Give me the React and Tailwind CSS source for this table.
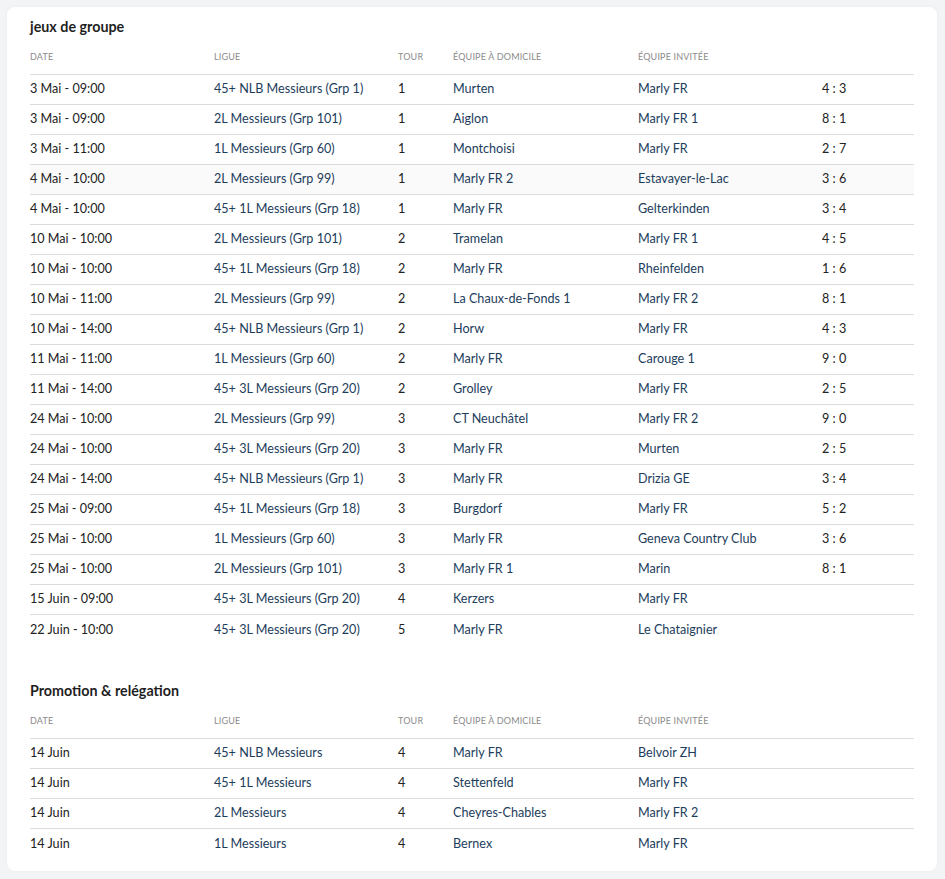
const groupGames = [
  ['3 Mai - 09:00', '45+ NLB Messieurs (Grp 1)', '1', 'Murten', 'Marly FR', '4 : 3'],
  ['3 Mai - 09:00', '2L Messieurs (Grp 101)', '1', 'Aiglon', 'Marly FR 1', '8 : 1'],
  ['3 Mai - 11:00', '1L Messieurs (Grp 60)', '1', 'Montchoisi', 'Marly FR', '2 : 7'],
  ['4 Mai - 10:00', '2L Messieurs (Grp 99)', '1', 'Marly FR 2', 'Estavayer-le-Lac', '3 : 6'],
  ['4 Mai - 10:00', '45+ 1L Messieurs (Grp 18)', '1', 'Marly FR', 'Gelterkinden', '3 : 4'],
  ['10 Mai - 10:00', '2L Messieurs (Grp 101)', '2', 'Tramelan', 'Marly FR 1', '4 : 5'],
  ['10 Mai - 10:00', '45+ 1L Messieurs (Grp 18)', '2', 'Marly FR', 'Rheinfelden', '1 : 6'],
  ['10 Mai - 11:00', '2L Messieurs (Grp 99)', '2', 'La Chaux-de-Fonds 1', 'Marly FR 2', '8 : 1'],
  ['10 Mai - 14:00', '45+ NLB Messieurs (Grp 1)', '2', 'Horw', 'Marly FR', '4 : 3'],
  ['11 Mai - 11:00', '1L Messieurs (Grp 60)', '2', 'Marly FR', 'Carouge 1', '9 : 0'],
  ['11 Mai - 14:00', '45+ 3L Messieurs (Grp 20)', '2', 'Grolley', 'Marly FR', '2 : 5'],
  ['24 Mai - 10:00', '2L Messieurs (Grp 99)', '3', 'CT Neuchâtel', 'Marly FR 2', '9 : 0'],
  ['24 Mai - 10:00', '45+ 3L Messieurs (Grp 20)', '3', 'Marly FR', 'Murten', '2 : 5'],
  ['24 Mai - 14:00', '45+ NLB Messieurs (Grp 1)', '3', 'Marly FR', 'Drizia GE', '3 : 4'],
  ['25 Mai - 09:00', '45+ 1L Messieurs (Grp 18)', '3', 'Burgdorf', 'Marly FR', '5 : 2'],
  ['25 Mai - 10:00', '1L Messieurs (Grp 60)', '3', 'Marly FR', 'Geneva Country Club', '3 : 6'],
  ['25 Mai - 10:00', '2L Messieurs (Grp 101)', '3', 'Marly FR 1', 'Marin', '8 : 1'],
  ['15 Juin - 09:00', '45+ 3L Messieurs (Grp 20)', '4', 'Kerzers', 'Marly FR', ''],
  ['22 Juin - 10:00', '45+ 3L Messieurs (Grp 20)', '5', 'Marly FR', 'Le Chataignier', ''],
]

const promoGames = [
  ['14 Juin', '45+ NLB Messieurs', '4', 'Marly FR', 'Belvoir ZH', ''],
  ['14 Juin', '45+ 1L Messieurs', '4', 'Stettenfeld', 'Marly FR', ''],
  ['14 Juin', '2L Messieurs', '4', 'Cheyres-Chables', 'Marly FR 2', ''],
  ['14 Juin', '1L Messieurs', '4', 'Bernex', 'Marly FR', ''],
]

const cols = 'grid grid-cols-[184px_184px_55px_185px_184px_1fr]'

function GameTable({ title, games, highlight }) {
  return (
    <section>
      <h2 className="text-[14.3px] font-bold leading-[20px] text-[#1f1f1f]">{title}</h2>
      <div className={`${cols} border-b border-[#dcdcdc] pt-[14px] pb-[11px] text-[9px] leading-[12px] uppercase text-[#8a8a8a] tracking-[0.02em]`}>
        <div>Date</div>
        <div>Ligue</div>
        <div>Tour</div>
        <div>Équipe à domicile</div>
        <div>Équipe invitée</div>
        <div></div>
      </div>
      {games.map((g, i) => (
        <div
          key={i}
          className={`${cols} h-[30px] items-center text-[12.6px] text-[#1d3d5c] ${
            i < games.length - 1 ? 'border-b border-[#dcdcdc]' : ''
          } ${i === highlight ? 'bg-[#fafafa]' : ''}`}
        >
          <div className="text-[#222222]">{g[0]}</div>
          <div>{g[1]}</div>
          <div className="text-[#222222]">{g[2]}</div>
          <div>{g[3]}</div>
          <div>{g[4]}</div>
          <div className="text-[#222222]">{g[5]}</div>
        </div>
      ))}
    </section>
  )
}

export default function App() {
  return (
    <div className="min-h-[879px] bg-[#f3f4f6] p-[7px] pr-[8px] font-['Lato','Liberation_Sans',sans-serif]">
      <div className="rounded-lg bg-white px-[23px] pt-[10px] pb-[12px] shadow-[0_0_3px_rgba(0,0,0,0.05)]">
        <GameTable title="jeux de groupe" games={groupGames} highlight={3} />
        <div className="mt-[36px]">
          <GameTable title="Promotion & relégation" games={promoGames} />
        </div>
      </div>
    </div>
  )
}
